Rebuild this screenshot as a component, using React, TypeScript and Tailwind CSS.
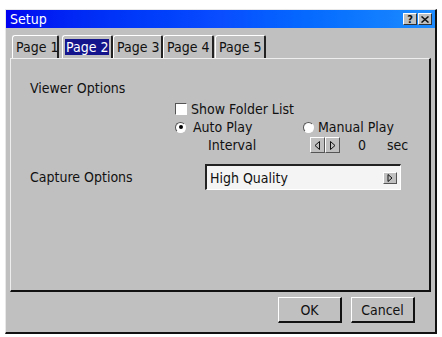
const font = { fontFamily: '"DejaVu Sans Condensed", "DejaVu Sans", sans-serif' };

const Tab = ({ label, active }: { label: string; active?: boolean }) => (
  <div className="w-full h-[23px] pl-[2px] flex items-center whitespace-nowrap border-t border-l border-white border-r-2 border-r-[#222] rounded-tl-[3px] rounded-tr-[2px] bg-[#c0c0c0]">
    <span className={active ? "bg-[#14148c] text-white px-[1px] leading-[16px]" : "px-[1px] leading-[16px] text-[#111]"}>
      {label}
    </span>
  </div>
);

const Arrow = ({ dir }: { dir: "left" | "right" }) => (
  <div className="w-[15px] h-[16px] bg-[#c0c0c0] border-t border-l border-white border-r border-b border-r-[#555] border-b-[#555] flex items-center justify-center">
    <svg width="7" height="9" viewBox="0 0 7 9">
      {dir === "left" ? (
        <path d="M5.5 0.5 L1 4.5 L5.5 8.5 Z" fill="none" stroke="#111" strokeWidth="1" />
      ) : (
        <path d="M1.5 0.5 L6 4.5 L1.5 8.5 Z" fill="none" stroke="#111" strokeWidth="1" />
      )}
    </svg>
  </div>
);

const Radio = ({ checked }: { checked?: boolean }) => (
  <div className="w-[11px] h-[11px] rounded-full bg-white border border-t-[#555] border-l-[#555] border-r-white border-b-white flex items-center justify-center">
    {checked && <div className="w-[4px] h-[4px] rounded-full bg-black" />}
  </div>
);

export default function App() {
  return (
    <div className="w-[442px] h-[337px] bg-white pt-[9px] pl-[5px] text-[14px] text-[#111]" style={font}>
      <div className="w-[432px] h-[325px] bg-[#c0c0c0] border-t border-l border-[#e8e8e8] border-r-2 border-b-2 border-r-[#111] border-b-[#111] flex flex-col">
        <div className="h-[18px] flex items-center justify-between bg-gradient-to-r from-[#0000f0] via-[#0a4cff] to-[#1e8cff] pl-[4px] pr-[3px]">
          <span className="text-white leading-[16px]">Setup</span>
          <div className="flex gap-[1px]">
            <div className="w-[14px] h-[12px] bg-[#c0c0c0] border-t border-l border-white border-r border-b border-r-[#333] border-b-[#333] flex items-center justify-center text-[11px] font-bold leading-none">
              ?
            </div>
            <div className="w-[14px] h-[12px] bg-[#c0c0c0] border-t border-l border-white border-r border-b border-r-[#333] border-b-[#333] flex items-center justify-center">
              <svg width="8" height="7" viewBox="0 0 8 7">
                <path d="M0.5 0.5 L7.5 6.5 M7.5 0.5 L0.5 6.5" stroke="#111" strokeWidth="1.5" />
              </svg>
            </div>
          </div>
        </div>

        <div className="flex mt-[7px] ml-[6px]">
          <div className="w-[47px] flex"><Tab label="Page 1" /></div>
          <div className="w-[51px] ml-[3px] flex"><Tab label="Page 2" active /></div>
          <div className="w-[50px] flex"><Tab label="Page 3" /></div>
          <div className="w-[51px] flex"><Tab label="Page 4" /></div>
          <div className="w-[51px] ml-[1px] flex"><Tab label="Page 5" /></div>
        </div>

        <div className="ml-[4px] w-[421px] h-[234px] border-t border-l border-[#eeeeee] border-r-2 border-b-2 border-r-[#111] border-b-[#111] flex flex-col">
          <div className="mt-[20px] ml-[19px] h-[18px] leading-[18px]">Viewer Options</div>
          <div className="mt-[3px] ml-[164px] flex flex-col">
            <div className="h-[18px] flex items-center">
              <div className="w-[12px] h-[12px] bg-white border-t border-l border-[#555] border-r border-b border-r-white border-b-white" />
              <span className="ml-[4px] leading-[18px]">Show Folder List</span>
            </div>
            <div className="h-[18px] flex items-center">
              <div className="w-[18px] flex"><Radio checked /></div>
              <span className="w-[110px] leading-[18px]">Auto Play</span>
              <div className="w-[15px] flex"><Radio /></div>
              <span className="leading-[18px]">Manual Play</span>
            </div>
            <div className="h-[18px] flex items-center">
              <span className="ml-[33px] w-[102px] leading-[18px]">Interval</span>
              <Arrow dir="left" />
              <Arrow dir="right" />
              <span className="ml-[18px] w-[29px] leading-[18px]">0</span>
              <span className="leading-[18px]">sec</span>
            </div>
          </div>
          <div className="mt-[10px] flex items-center">
            <span className="ml-[19px] w-[175px] leading-[18px]">Capture Options</span>
            <div className="w-[196px] h-[26px] bg-[#f4f4f4] border-t-2 border-l-2 border-[#222] border-r border-b border-r-white border-b-white flex items-center justify-between pl-[3px] pr-[3px]">
              <span className="leading-[18px]">High Quality</span>
              <div className="w-[14px] h-[12px] bg-[#c0c0c0] border-t border-l border-white border-r border-b border-r-[#555] border-b-[#555] flex items-center justify-center">
                <svg width="6" height="8" viewBox="0 0 6 8">
                  <path d="M1 0.5 L5 4 L1 7.5 Z" fill="none" stroke="#111" strokeWidth="1" />
                </svg>
              </div>
            </div>
          </div>
        </div>

        <div className="flex justify-end gap-[9px] mt-[5px] mr-[20px]">
          <button className="w-[64px] h-[26px] bg-[#c0c0c0] border-t border-l border-white border-r-2 border-b-2 border-r-[#111] border-b-[#111] leading-[18px]">
            OK
          </button>
          <button className="w-[64px] h-[26px] bg-[#c0c0c0] border-t border-l border-white border-r-2 border-b-2 border-r-[#111] border-b-[#111] leading-[18px]">
            Cancel
          </button>
        </div>
      </div>
    </div>
  );
}
